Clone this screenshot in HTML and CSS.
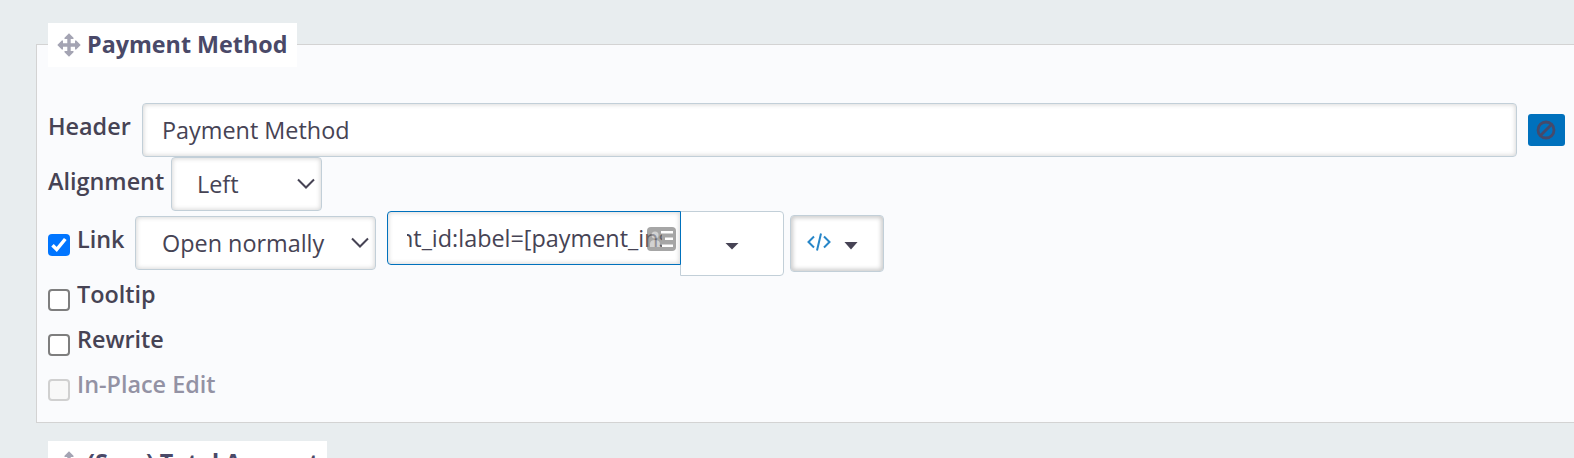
FILE: index.html
```html
<!DOCTYPE html>
<html lang="en">
<head>
<meta charset="utf-8">
<title>Column settings</title>
<link rel="stylesheet" href="styles.css">
</head>
<body>
<section class="column">
  <h2 class="legend">
    <svg class="move" viewBox="0 0 24 24"><path d="M12 0.300L16.500 4.800V6H13.700V10.300H18V7.500H19.200L23.700 12L19.200 16.500H18V13.700H13.700V18H16.500V19.200L12 23.700L7.500 19.200V18H10.300V13.700H6V16.500H4.800L0.300 12L4.800 7.500H6V10.300H10.300V6H7.500V4.800Z"/></svg>
    <span class="title">Payment Method</span>
  </h2>
  <div class="row row-header">
    <span class="label label-header">Header</span>
    <div class="field field-header">Payment Method</div>
    <button class="remove" type="button"><svg viewBox="0 0 20 20"><circle cx="10" cy="10" r="8"/><path d="M4.500 15.500L15.500 4.500"/></svg></button>
  </div>
  <div class="row row-align">
    <span class="label label-align">Alignment</span>
    <div class="field select select-align">Left<svg class="chevron" viewBox="0 0 18 12"><path d="M1 1.500L9 9.500L17 1.500"/></svg></div>
  </div>
  <div class="row row-link">
    <span class="check checked"><svg viewBox="0 0 22 22"><path d="M4.500 11.300L8.700 15.500L17.300 5"/></svg></span>
    <span class="label label-link">Link</span>
    <div class="field select select-link">Open normally<svg class="chevron" viewBox="0 0 18 12"><path d="M1 1.500L9 9.500L17 1.500"/></svg></div>
    <div class="field path"><div class="clip"><span class="path-text">ent_id:label=[payment_inst</span></div>
      <svg class="card" viewBox="0 0 29 24"><rect width="29" height="24" rx="4"/><path class="hole" d="M14 4H26V6.500H14ZM18 10.500H26V13H18ZM15 17.500H26V20H15Z"/><circle class="person" cx="8" cy="8" r="3.500"/><path class="person" d="M3 20V17Q3 13 8 13T13 17V20Z"/></svg>
    </div>
    <div class="drop"><i class="caret"></i></div>
    <div class="field token"><svg class="code" viewBox="0 0 24 18"><path d="M7 3.500L1.500 9L7 14.500M17 3.500L22.500 9L17 14.500M14 0.500L10 17.500"/></svg><i class="caret"></i></div>
  </div>
  <div class="row option"><span class="check"></span><span class="label">Tooltip</span></div>
  <div class="row option"><span class="check"></span><span class="label">Rewrite</span></div>
  <div class="row option disabled"><span class="check"></span><span class="label">In-Place Edit</span></div>
</section>
<section class="column next">
  <h2 class="legend legend-next">
    <svg class="move" viewBox="0 0 24 24"><path d="M12 0.300L16.500 4.800V6H13.700V10.300H18V7.500H19.200L23.700 12L19.200 16.500H18V13.700H13.700V18H16.500V19.200L12 23.700L7.500 19.200V18H10.300V13.700H6V16.500H4.800L0.300 12L4.800 7.500H6V10.300H10.300V6H7.500V4.800Z"/></svg>
    <span class="title">(Sum) Total Amount</span>
  </h2>
</section>
</body>
</html>
```
FILE: styles.css
```css
* { box-sizing: border-box; }
body {
  margin: 0;
  height: 458px;
  padding: 44px 0 0 36px;
  overflow: hidden;
  background: #e8edef;
  color: #464354;
  font: 23.400px/32px "Open Sans", sans-serif;
}
.column {
  width: 1560px;
  height: 379px;
  padding-left: 11px;
  border: 1px solid #d3d3d3;
  background: #fafbfd;
}
.next { margin-top: 39px; }
.legend {
  display: flex;
  align-items: center;
  gap: 6px;
  width: 249px;
  height: 44px;
  margin: -22px 0 36px;
  padding-left: 9px;
  background: #fff;
  color: #4a4968;
  font-size: 23.300px;
  font-weight: 700;
  white-space: nowrap;
}
.title { padding-bottom: 2px; }
.legend-next { width: 279px; }
.move { width: 24px; height: 24px; fill: #a4a4b3; }
.row { display: flex; align-items: flex-start; white-space: nowrap; }
.label { font-weight: 600; }
.field {
  display: flex;
  align-items: center;
  height: 54px;
  border: 1px solid #c2cfd8;
  border-radius: 4px;
  background: #fff;
  box-shadow: inset 0 0 4px 1px rgba(0, 0, 0, .15);
}
.row-header { height: 54px; }
.label-header { width: 94px; padding-top: 7px; }
.field-header { width: 1375px; padding-left: 19px; }
.remove {
  display: flex;
  align-items: center;
  justify-content: center;
  width: 37px;
  height: 32px;
  margin: 11px 0 0 11px;
  padding: 0 1px 0 0;
  border: 0;
  border-radius: 3px;
  background: #0071bd;
}
.remove svg { width: 20px; height: 20px; padding-bottom: 0; fill: none; stroke: #464a6b; stroke-width: 2.800; }
.row-align { height: 54px; }
.label-align { width: 123px; padding-top: 8px; }
.select { justify-content: space-between; padding-right: 6px; }
.select-align { width: 151px; padding-left: 25px; }
.chevron { width: 18px; height: 12px; fill: none; stroke: #464354; stroke-width: 2; }
.row-link { height: 68px; }
.check {
  width: 22px;
  height: 22px;
  border: 2px solid #7e7e7e;
  border-radius: 4px;
  background: #fff;
}
.checked { margin-top: 23px; border: 0; background: #0075ff; }
.checked svg { display: block; fill: none; stroke: #fff; stroke-width: 3.500; }
.label-link { width: 65px; padding: 12px 0 0 7px; }
.select-link { width: 241px; margin-top: 5px; padding-left: 26px; }
.path {
  position: relative;
  width: 294px;
  margin-left: 11px;
  border-color: #0071bd;
  border-radius: 4px 0 0 4px;
}
.clip { display: flex; justify-content: flex-end; width: 255px; margin-left: 19px; overflow: hidden; }
.path-text { margin-right: -16px; }
.card { position: absolute; left: 259px; top: 15px; width: 29px; height: 24px; fill: #777; opacity: .65; }
.card .hole { fill: #fff; }
.card .person { fill: #bbb; }
.drop {
  display: flex;
  align-items: center;
  justify-content: center;
  width: 104px;
  height: 65px;
  margin-left: -1px;
  padding-top: 5px;
  border: 1px solid #c2cfd8;
  border-radius: 0 4px 4px 0;
  background: #fff;
}
.caret {
  width: 14px;
  height: 7px;
  background: #464354;
  clip-path: polygon(0 0, 100% 0, 50% 100%);
}
.token {
  gap: 13px;
  width: 94px;
  height: 57px;
  margin: 4px 0 0 6px;
  padding-left: 16px;
  box-shadow: inset 0 0 4px 2px rgba(0, 0, 0, .2);
}
.token .caret { height: 8px; margin-top: 4px; }
.code { width: 24px; height: 18px; margin-top: -4px; fill: none; stroke: #2786c8; stroke-width: 2; }
.option { height: 45px; }
.option .check { margin-top: 10px; }
.option .label { margin: -1px 0 0 7px; }
.disabled .check { border-color: #d0d0d0; background: #f8f8f8; }
.disabled .label { color: #9392a4; }
```
